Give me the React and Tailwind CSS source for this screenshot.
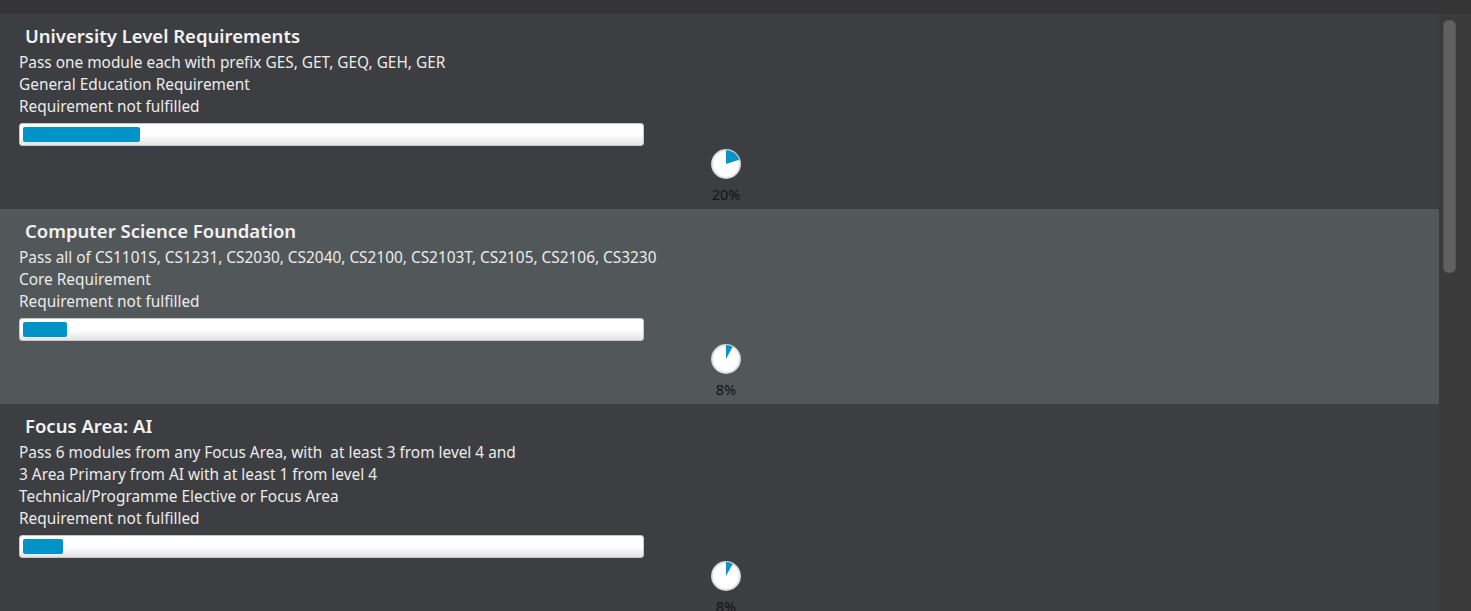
import React from "react";

const requirements = [
  {
    title: "University Level Requirements",
    lines: ["Pass one module each with prefix GES, GET, GEQ, GEH, GER", "General Education Requirement"],
    percent: 20,
    fill: 117,
    highlight: false,
  },
  {
    title: "Computer Science Foundation",
    lines: [
      "Pass all of CS1101S, CS1231, CS2030, CS2040, CS2100, CS2103T, CS2105, CS2106, CS3230",
      "Core Requirement",
    ],
    percent: 8,
    fill: 44,
    highlight: true,
  },
  {
    title: "Focus Area: AI",
    lines: [
      "Pass 6 modules from any Focus Area, with \u00a0at least 3 from level 4 and",
      "3 Area Primary from AI with at least 1 from level 4",
      "Technical/Programme Elective or Focus Area",
    ],
    percent: 8,
    fill: 40,
    highlight: false,
  },
];

// small pie showing progress, wedge starts at 12 o'clock
const Pie = ({ percent }) => {
  const r = 14;
  const a = (percent / 100) * Math.PI * 2;
  const x = 15 + r * Math.sin(a);
  const y = 15 - r * Math.cos(a);
  const large = percent > 50 ? 1 : 0;
  return (
    <svg width="30" height="30" viewBox="0 0 30 30">
      <defs>
        <radialGradient id={`pg${percent}`} cx="50%" cy="50%" r="50%">
          <stop offset="80%" stopColor="#ffffff" />
          <stop offset="100%" stopColor="#c9c9c9" />
        </radialGradient>
      </defs>
      <circle cx="15" cy="15" r="15" fill={`url(#pg${percent})`} />
      <path d={`M15 15 L15 1 A${r} ${r} 0 ${large} 1 ${x} ${y} Z`} fill="#0a93c6" />
    </svg>
  );
};

const ProgressBar = ({ fill }) => (
  <div className="w-[625px] h-[23px] rounded-[3px] border border-[#c8c8c8] bg-gradient-to-b from-white via-white to-[#e4e4e4] p-[3px]">
    <div className="h-full rounded-[2px] bg-[#0093c7]" style={{ width: fill }} />
  </div>
);

const RequirementCard = ({ req }) => (
  <div className={`${req.highlight ? "bg-[#52575a]" : "bg-[#3d3e41]"} pt-[10px] pb-[6px] shrink-0`}>
    <h3 className="pl-[25px] text-[18.5px] leading-[24px] font-semibold text-[#f2f2f2]">{req.title}</h3>
    <div className="pl-[19px] mt-[4px] text-[15.4px] leading-[22px] text-[#ececec]">
      {req.lines.map((line, i) => (
        <p key={i}>{line}</p>
      ))}
      <p>Requirement not fulfilled</p>
    </div>
    <div className="pl-[19px] mt-[5px]">
      <ProgressBar fill={req.fill} />
    </div>
    <div className="w-[1452px] flex flex-col items-center mt-[3px]">
      <Pie percent={req.percent} />
      <span className="text-[14.5px] leading-[18px] text-[#141414] mt-[6px]">{req.percent}%</span>
    </div>
  </div>
);

export default function App() {
  return (
    <div className="w-[1471px] h-[611px] overflow-hidden bg-[#353535] flex flex-col" style={{ fontFamily: '"Noto Sans", "Open Sans", sans-serif' }}>
      <div className="h-[14px] shrink-0 bg-[#353535]" />
      <div className="flex flex-1 min-h-0">
        <div className="w-[1439px] flex flex-col overflow-hidden">
          {requirements.map((req, i) => (
            <RequirementCard key={i} req={req} />
          ))}
        </div>
        <div className="flex-1 bg-[#3a3a3a] pt-[6px] pl-[4px]">
          <div className="w-[13px] h-[253px] rounded-[5px] bg-[#606060] border border-[#555555]" />
        </div>
      </div>
    </div>
  );
}
